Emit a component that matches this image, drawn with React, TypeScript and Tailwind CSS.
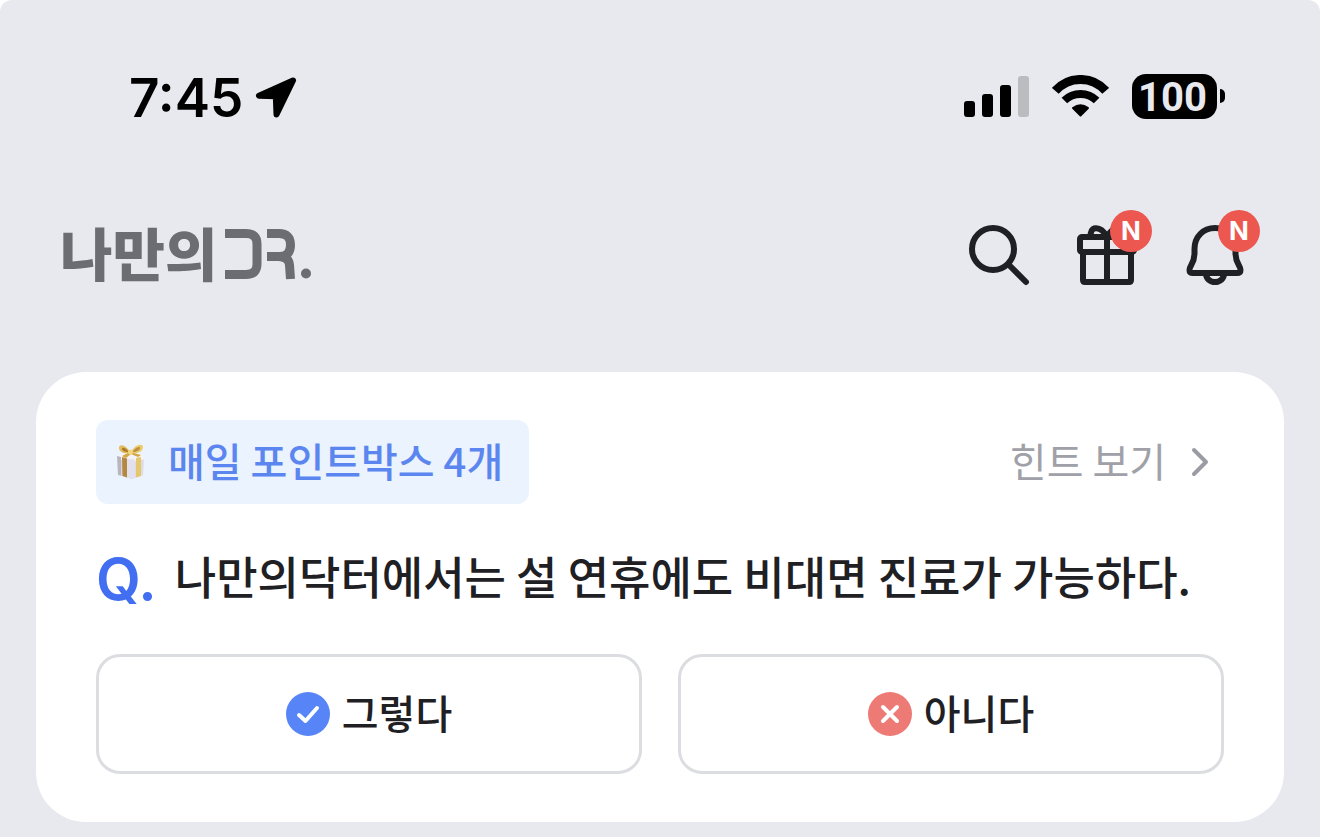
import type { ReactNode } from "react";

const korean = "font-['Noto_Sans_CJK_KR','Noto_Sans',sans-serif]";

function LocationArrow() {
  return (
    <svg viewBox="0 0 42 42" className="size-[42px]" aria-hidden="true">
      <path
        d="M38 3.5 L4 18.8 L20.8 19.2 L21.5 37.5 Z"
        fill="#000"
        stroke="#000"
        strokeWidth="6"
        strokeLinejoin="round"
      />
    </svg>
  );
}

function SignalBars() {
  return (
    <div className="flex items-end gap-[7px]" role="img" aria-label="Signal">
      <span className="h-4 w-[11px] rounded-[3px] bg-black" />
      <span className="h-[23px] w-[11px] rounded-[3px] bg-black" />
      <span className="h-8 w-[11px] rounded-[3px] bg-black" />
      <span className="h-[41px] w-[11px] rounded-[3px] bg-[#bbbcc0]" />
    </div>
  );
}

function Wifi() {
  return (
    <svg viewBox="0 0 57 42" className="h-[42px] w-[57px]" fill="none" stroke="#000" aria-hidden="true">
      <path d="M3.3 15.9 A33.5 33.5 0 0 1 53.7 15.9" strokeWidth="9" />
      <path d="M12.4 25.5 A23 23 0 0 1 44.6 25.5" strokeWidth="8" />
      <path d="M21 33 Q28.5 27.5 36 33 L28.5 40.5 Z" fill="#000" strokeWidth="2" strokeLinejoin="round" />
    </svg>
  );
}

function Battery() {
  return (
    <div className="flex items-center gap-[3px]">
      <span className="flex h-[45px] w-[85px] items-center justify-center rounded-[14px] bg-black pt-1 pr-1 font-[Roboto,sans-serif] text-[40px] leading-none font-bold text-[#e8e9ee]">
        100
      </span>
      <span className="h-[14px] w-[5px] rounded-r-full bg-black" />
    </div>
  );
}

function LogoMark() {
  return (
    <svg viewBox="0 0 88 56" className="h-14 w-[88px]" fill="none" stroke="#6b6d73" strokeWidth="9" aria-hidden="true">
      <path d="M0 6.5 H21 Q32 6.5 32 17 V37 Q32 47.5 21 47.5 H0" />
      <path d="M42 6.5 H54 Q65.5 6.5 65.5 18 Q65.5 29.5 54 29.5 H42 M54 29.5 Q64 30 64.5 38 L65.5 52" />
      <circle cx="81" cy="46.5" r="5" fill="#6b6d73" stroke="none" />
    </svg>
  );
}

function HeaderButton({ label, badge, children }: { label: string; badge?: string; children: ReactNode }) {
  return (
    <button type="button" aria-label={label} className="relative size-[72px]">
      <svg
        viewBox="0 0 72 72"
        className="size-[72px]"
        fill="none"
        stroke="#1f2024"
        strokeWidth="6"
        strokeLinecap="round"
        strokeLinejoin="round"
        aria-hidden="true"
      >
        {children}
      </svg>
      {badge && (
        <span className="absolute -top-[9px] left-[39px] flex size-[42px] items-center justify-center rounded-full bg-[#ec574f] font-[Inter,sans-serif] text-[26px] leading-none font-bold text-white">
          {badge}
        </span>
      )}
    </button>
  );
}

function GiftBox() {
  return (
    <svg viewBox="0 0 30 36" className="h-9 w-[30px]" aria-hidden="true">
      <path d="M2 13 L16 16 V35 L3 31 Z" fill="#d6d4de" />
      <path d="M16 16 L28 13 L27 31 L16 35 Z" fill="#dddbe6" />
      <path d="M1 11 L14 8 L29 11 V15 L16 18 L1 15 Z" fill="#f4f3f8" />
      <path d="M6 13 L11 14.5 V33.5 L6.5 32 Z" fill="#b3893f" />
      <path d="M20 14 L25 13 V32 L20 33.5 Z" fill="#e5c76c" />
      <path d="M1 12 L5 13 V31.5 L2 31 Z" fill="#b9b5bb" />
      <path d="M11 14.5 L19 16 V33.5 L16 35 L11 33.5 Z" fill="#e2e0ec" />
      <path d="M14 8 C9 0 3 0 3 4 C3 8 8 10 14 9 Z" fill="#e3bd5d" />
      <path d="M15 8 C19 0 27 -1 27 3 C27 8 21 10 15 9 Z" fill="#edcb6d" />
      <path d="M12 7 C9 3 6 3 6 5 C6 7 9 8 12 8 Z" fill="#a77b2b" />
      <path d="M17 7 C20 3 24 2 24 4 C24 6 21 8 17 8 Z" fill="#bc9140" />
      <path d="M14 8 L6 12 L10 14 L15 10 L22 13 L25 11 Z" fill="#d2a641" />
      <circle cx="14.5" cy="8" r="2.5" fill="#f1d681" />
    </svg>
  );
}

function AnswerButton({ label, color, mark }: { label: string; color: string; mark: string }) {
  return (
    <button
      type="button"
      className="flex h-[120px] flex-1 items-center justify-center gap-3 rounded-3xl border-3 border-[#dcdde0] text-[40px] leading-none font-medium text-[#1f2024]"
    >
      <svg viewBox="0 0 44 44" className="size-11" aria-hidden="true">
        <circle cx="22" cy="22" r="22" fill={color} />
        <path d={mark} fill="none" stroke="#fff" strokeWidth="4" strokeLinecap="round" strokeLinejoin="round" />
      </svg>
      <span className="pb-1">{label}</span>
    </button>
  );
}

export default function App() {
  return (
    <div className="min-h-screen bg-white">
      <div className={`min-h-screen rounded-t-xl bg-[#e8e9ee] ${korean}`}>
        <div className="flex items-center justify-between pt-[72px] pr-[95px] pl-[129px]">
          <div className="flex h-12 items-center gap-3 pt-1">
            <time className="font-[Inter,sans-serif] text-[53px] leading-none font-semibold text-black">7:45</time>
            <LocationArrow />
          </div>
          <div className="flex h-12 items-center gap-[23px]">
            <SignalBars />
            <Wifi />
            <Battery />
          </div>
        </div>

        <header className="mt-[99px] flex items-center justify-between pr-[69px] pl-[60px]">
          <h1 className="flex items-center gap-2 text-[57px] leading-none font-black text-[#6b6d73]">
            <span className="pb-2">나만의</span>
            <LogoMark />
          </h1>
          <nav className="flex gap-9">
            <HeaderButton label="검색">
              <circle cx="30" cy="30" r="21" />
              <path d="M46 46 L63 63" />
            </HeaderButton>
            <HeaderButton label="선물" badge="N">
              <rect x="9" y="18" width="54" height="15" rx="2" />
              <path d="M12 33 V61 Q12 63 14 63 H58 Q60 63 60 61 V33" />
              <path d="M36 18 V63" />
              <path d="M20 17 C18 8 29 5 36 18 C43 5 54 8 52 17" />
            </HeaderButton>
            <HeaderButton label="알림" badge="N">
              <path d="M36 9 C24 9 15.5 18 15.5 30 V34 C15.5 45 10.5 46 10.5 51 Q10.5 54 14 54 H58 Q61.5 54 61.5 51 C61.5 46 56.5 45 56.5 34 V30 C56.5 18 48 9 36 9 Z" />
              <path d="M27 55 A9 8 0 0 0 45 55" />
            </HeaderButton>
          </nav>
        </header>

        <main className="px-9 pt-[81px] pb-[15px]">
          <section className="rounded-[50px] bg-white px-[60px] py-12">
            <div className="flex items-center justify-between">
              <div className="flex h-[84px] items-center gap-[22px] rounded-xl bg-[#eaf3fe] pr-[26px] pl-5 text-[40px] leading-none font-medium text-[#5b86f0]">
                <GiftBox />
                <span className="pb-1">매일 포인트박스 4개</span>
              </div>
              <a href="#hint" className="flex items-center gap-6 pr-[14px] text-[40px] leading-none text-[#a0a1a8]">
                <span className="pb-1">힌트 보기</span>
                <svg viewBox="0 0 20 32" className="h-8 w-5" fill="none" stroke="#9b9ca3" strokeWidth="4" strokeLinecap="round" strokeLinejoin="round" aria-hidden="true">
                  <path d="M4 4 L16 16 L4 28" />
                </svg>
              </a>
            </div>

            <h2 className="flex h-[150px] items-center gap-[18px] text-[45px] leading-none font-medium text-[#1f2024]">
              <span className="font-[Inter,sans-serif] text-[58px] leading-none font-semibold text-[#426ff2]">Q.</span>
              <span className="pb-2 whitespace-nowrap">나만의닥터에서는 설 연휴에도 비대면 진료가 가능하다.</span>
            </h2>

            <div className="flex gap-9">
              <AnswerButton label="그렇다" color="#5784f6" mark="M13 23 L19.5 29 L31 16" />
              <AnswerButton label="아니다" color="#ee7a76" mark="M15 15 L29 29 M29 15 L15 29" />
            </div>
          </section>
        </main>
      </div>
    </div>
  );
}
